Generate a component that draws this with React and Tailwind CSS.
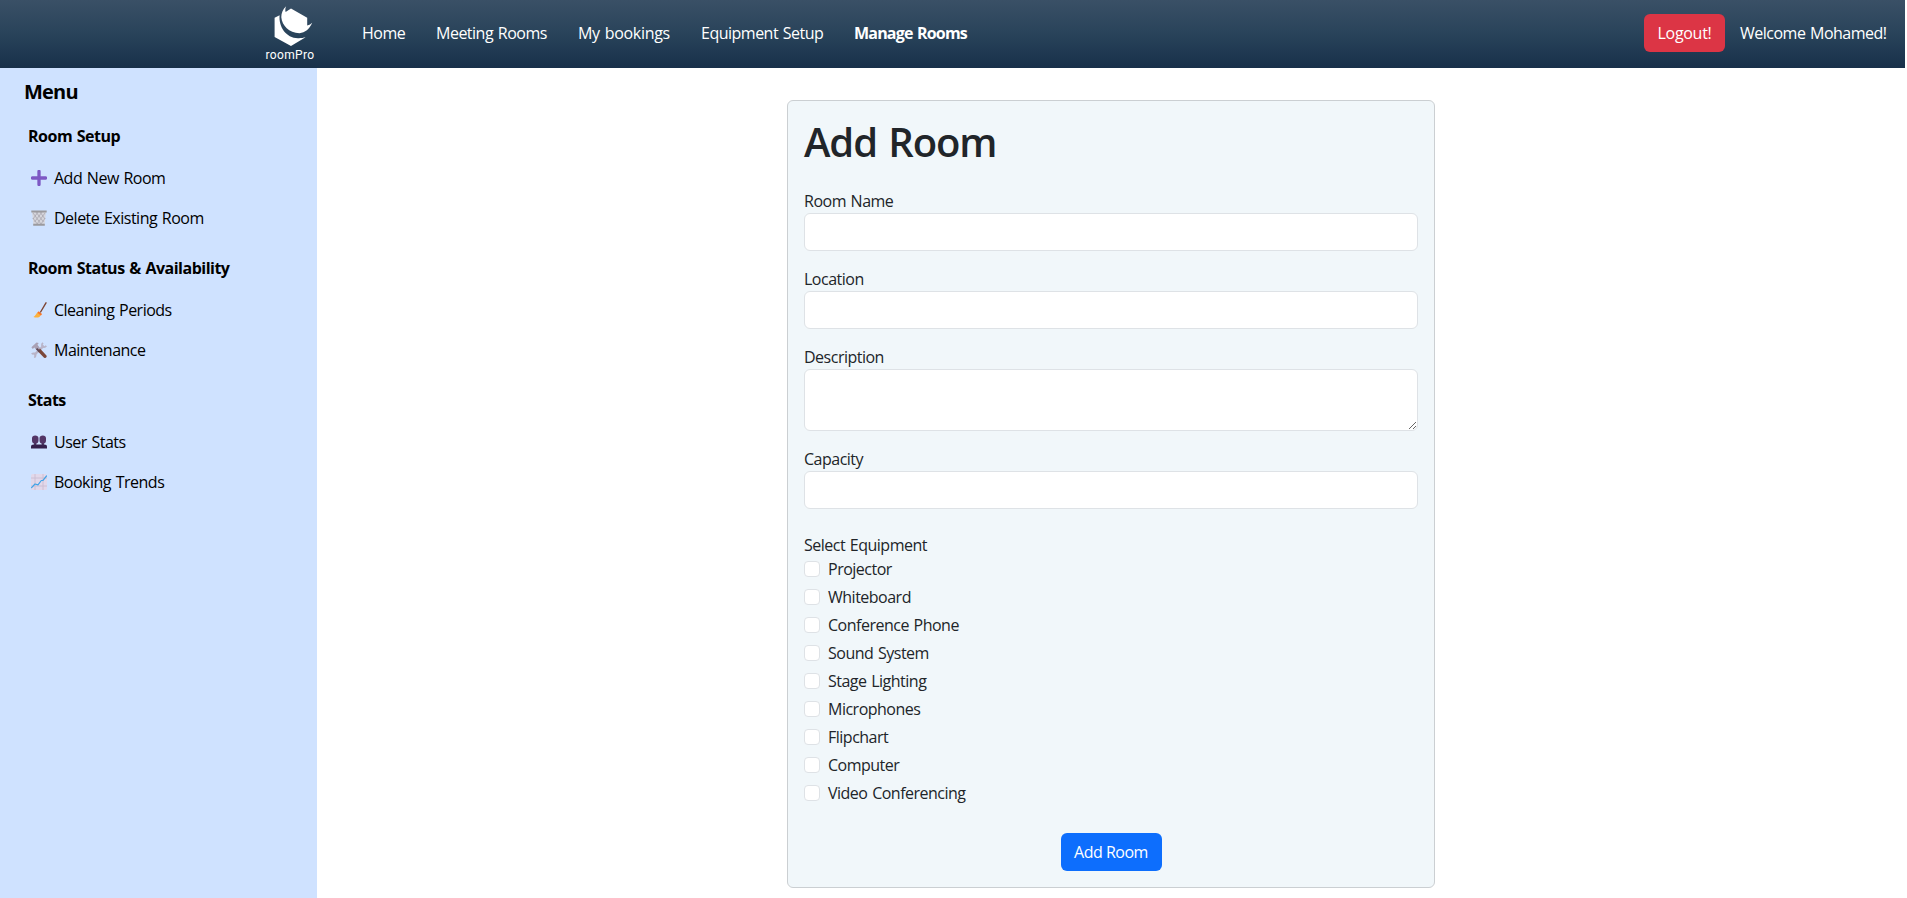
const NAV = [
  { label: "Home", cls: "w-[74px]" },
  { label: "Meeting Rooms", cls: "w-[142px]" },
  { label: "My bookings", cls: "w-[123px] tracking-[-0.3px]" },
  { label: "Equipment Setup", cls: "w-[153px]" },
  { label: "Manage Rooms", cls: "w-[120px] font-bold tracking-[-0.8px]" },
];

const EQUIPMENT = [
  "Projector",
  "Whiteboard",
  "Conference Phone",
  "Sound System",
  "Stage Lighting",
  "Microphones",
  "Flipchart",
  "Computer",
  "Video Conferencing",
];

function Logo() {
  return (
    <div className="flex w-[50px] flex-col items-center pt-[5px]">
      <svg width="42" height="42" viewBox="0 0 42 42" fill="#fff" className="ml-[3px]">
        <path d="M15.2 1.2 C14.2 3 14.1 5 14.6 6.9 L20 3.6 L36.2 12.8 L36.2 20.6 C38.3 20 40 19 41.2 17.8 C38.5 24 34 27.8 28.5 28.2 C18 28 11 20.5 10.3 12.3 C10.2 8 12 4 15.2 1.2 Z" />
        <path d="M3.6 12.7 L8.6 10.2 C7.5 21.5 15 33 27 33.2 C30 33.3 32.2 32.9 34.6 32.3 L20 41 L3.6 32 Z" />
      </svg>
      <span className="pt-px font-[Roboto,sans-serif] text-[12px] leading-[14px] tracking-[0.35px]">roomPro</span>
    </div>
  );
}

function PlusIcon() {
  return (
    <svg width="16" height="16" viewBox="0 0 16 16">
      <path d="M8 1.4v13.2M1.4 8h13.2" stroke="#7d58c4" strokeWidth="3.3" strokeLinecap="round" />
    </svg>
  );
}

function TrashIcon() {
  return (
    <svg width="16" height="16" viewBox="0 0 16 16">
      <path d="M1 1.5h14L13.6 14H2.4z" fill="#d6d6dc" />
      <path d="M2 3l8 11M5 2l7.5 10M9 2l5 7M1.8 8l4.5 6M14 3L6 14M11 2L3.5 12M7 2L2 9M14.2 8L10 14" stroke="#aaa7b0" strokeWidth="0.8" />
      <path d="M0.3 0.5h15.4v1.9H0.3zM2.2 13.8h11.6v2H2.2z" fill="#9b9a9e" />
    </svg>
  );
}

function BroomIcon() {
  return (
    <svg width="16" height="16" viewBox="0 0 16 16">
      <path d="M15 0.8L9.6 10" stroke="#7d4533" strokeWidth="1.4" strokeLinecap="round" />
      <path d="M7.2 10l3 2.3c-.6 2-1.8 3.1-3.4 3.2-1.7.1-3.2-.1-4.4-.5C4.5 14 5.3 11 7.2 10z" fill="#fcb13f" />
      <path d="M7.6 9.2l3.5 2.7-1.2 1.5-3.5-2.7z" fill="#f8762c" />
    </svg>
  );
}

function ToolsIcon() {
  return (
    <svg width="16" height="16" viewBox="0 0 16 16" fill="none">
      <path d="M3 13.2L12.8 3.6" stroke="#b9b4c8" strokeWidth="2.4" />
      <path d="M12 .8c-1.7 1.6-1.3 3.9.3 4.2 1.2.3 2.3-.1 3-1.2M.7 12.2c1.5-1.4 4-.9 3.9.8 0 1.2-.5 2-1.3 2.6" stroke="#b9b4c8" strokeWidth="1.7" />
      <path d="M8 8l6 6.3" stroke="#7b4739" strokeWidth="3.3" strokeLinecap="round" />
      <path d="M.4 5.2L5.5.5l2.2.5-1.2 1.8 2.8 3.6-2.8 2.8L3.3 5.6 1.8 7z" fill="#a9a1b5" />
      <path d="M5.6 6.6l3 3" stroke="#5e4653" strokeWidth="1.8" />
    </svg>
  );
}

function UsersIcon() {
  return (
    <svg width="16" height="16" viewBox="0 0 16 16">
      <path d="M0 14.6v-1.8c0-1.5 1-2.3 2.7-2.3h10.6c1.7 0 2.7.8 2.7 2.3v1.8z" fill="#341f4b" />
      <path d="M3.1 8.5h2.2v3H3.1zM10.7 8.5h2.2v3h-2.2z" fill="#402854" />
      <path d="M1 4.3C1 2.5 2.3 1.5 4.2 1.5S7.5 2.5 7.5 4.3v2.2C7.5 8.6 6 9.8 4.2 9.8S1 8.6 1 6.5zM8.500 4.300c0-1.800 1.400-2.800 3.300-2.800S15 2.500 15 4.300v2.200c0 2.100-1.400 3.300-3.200 3.300S8.500 8.600 8.500 6.500z" fill="#533566" />
    </svg>
  );
}

function TrendIcon() {
  return (
    <svg width="16" height="16" viewBox="0 0 16 16" fill="none">
      <rect width="16" height="16" rx="1.5" fill="#e2d8ea" />
      <path d="M4 0v16M12 0v16M0 4h16M0 12h16" stroke="#c9bdd3" strokeWidth="0.9" />
      <path d="M.6 13.6L4 10l3 .8 3.3-4.3L12 6.3 15.5 2" stroke="#3fa3e8" strokeWidth="1.2" strokeLinecap="round" strokeLinejoin="round" />
    </svg>
  );
}

const GROUPS = [
  { title: "Room Setup", items: [["Add New Room", PlusIcon], ["Delete Existing Room", TrashIcon]] },
  { title: "Room Status & Availability", items: [["Cleaning Periods", BroomIcon], ["Maintenance", ToolsIcon]] },
  { title: "Stats", items: [["User Stats", UsersIcon], ["Booking Trends", TrendIcon]] },
];

const FIELD = "block w-full rounded-md border border-[#dee2e6] bg-white px-3 outline-none";

function Field({ label, area }) {
  return (
    <label className="mb-4 block">
      <span className="block h-6">{label}</span>
      {area ? <textarea className={`${FIELD} h-[62px]`} /> : <input className={`${FIELD} h-[38px]`} />}
    </label>
  );
}

export default function App() {
  return (
    <div className="h-[898px] w-full overflow-hidden bg-white pr-[2px] font-['Open_Sans',sans-serif] text-[16px] leading-6 tracking-[-0.5px] text-[#212529] [word-spacing:1px]">
      <header className="flex h-[68px] bg-linear-to-b from-[#3a5066] via-[#29435a] to-[#18304a] pl-[265px] text-white">
        <Logo />
        <nav className="ml-[47px] flex items-center pb-[2px]">
          {NAV.map((n) => (
            <a key={n.label} className={`block whitespace-nowrap ${n.cls}`}>{n.label}</a>
          ))}
        </nav>
        <div className="ml-auto flex items-center pb-[2px]">
          <button className="h-[38px] w-[81px] rounded-md bg-[#dc3545] tracking-[-0.3px]">Logout!</button>
          <span className="ml-[15px] w-[165px] whitespace-nowrap">Welcome Mohamed!</span>
        </div>
      </header>
      <div className="flex h-[830px]">
        <aside className="w-[317px] shrink-0 bg-[#cfe2ff] pt-3 text-black">
          <h2 className="pl-[24px] text-[20px] font-bold leading-6 tracking-[-0.8px]">Menu</h2>
          <div className="pt-5">
            {GROUPS.map((g) => (
              <section key={g.title} className="h-[132px]">
                <h3 className="pl-[28px] font-bold tracking-[-0.5px]">{g.title}</h3>
                <ul className="pt-[10px]">
                  {g.items.map(([label, Icon]) => (
                    <li key={label} className="flex h-10 items-center gap-[7px] pl-[31px]">
                      <Icon />
                      <span>{label}</span>
                    </li>
                  ))}
                </ul>
              </section>
            ))}
          </div>
        </aside>
        <main className="flex-1 pt-8">
          <form className="ml-[470px] h-[788px] w-[648px] rounded-md border border-[#cbcfd2] bg-[#f1f7fa] p-4">
            <h1 className="mb-6 h-12 pt-px text-[40px] font-semibold leading-[48px] tracking-[-1.1px] [word-spacing:2px]">Add Room</h1>
            <Field label="Room Name" />
            <Field label="Location" />
            <Field label="Description" area />
            <Field label="Capacity" />
            <div className="mt-6">Select Equipment</div>
            <div className="flex flex-col gap-1">
              {EQUIPMENT.map((e) => (
                <label key={e} className="flex h-6 items-start gap-2">
                  <input type="checkbox" className="mt-1 size-4 appearance-none rounded border border-[#dee2e6] bg-white" />
                  <span>{e}</span>
                </label>
              ))}
            </div>
            <div className="mt-7 flex justify-center">
              <button type="button" className="h-[38px] w-[101px] rounded-md bg-[#0d6efd] text-white">Add Room</button>
            </div>
          </form>
        </main>
      </div>
    </div>
  );
}
